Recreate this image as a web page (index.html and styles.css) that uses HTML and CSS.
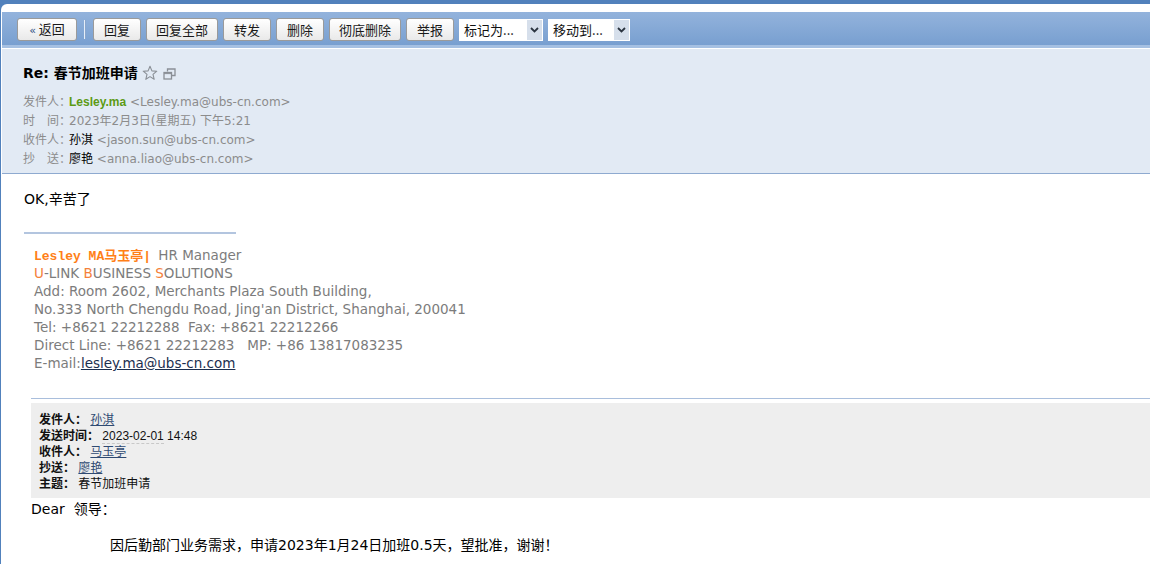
FILE: index.html
```html
<!DOCTYPE html>
<html lang="zh-CN">
<head>
<meta charset="utf-8">
<title>Re: 春节加班申请</title>
<link rel="stylesheet" href="styles.css">
</head>
<body>
<div class="frame">
  <div class="win">
    <div class="toolbar">
      <button class="btn btn-back"><span class="laquo">«</span> 返回</button>
      <span class="sep"></span>
      <button class="btn">回复</button>
      <button class="btn">回复全部</button>
      <button class="btn">转发</button>
      <button class="btn">删除</button>
      <button class="btn">彻底删除</button>
      <button class="btn">举报</button>
      <div class="select sel-mark"><span class="sel-text">标记为...</span><span class="sel-arrow"><svg width="9" height="6" viewBox="0 0 9 6"><path d="M1 1 L4.5 4.5 L8 1" fill="none" stroke="#2b3440" stroke-width="1.8"/></svg></span></div>
      <div class="select sel-move"><span class="sel-text">移动到...</span><span class="sel-arrow"><svg width="9" height="6" viewBox="0 0 9 6"><path d="M1 1 L4.5 4.5 L8 1" fill="none" stroke="#2b3440" stroke-width="1.8"/></svg></span></div>
    </div>
    <div class="toolbar-strip"></div>
    <div class="head">
      <div class="subject">
        <span class="subject-text">Re: 春节加班申请</span>
        <svg class="ico-star" width="16" height="16" viewBox="0 0 16 16"><path d="M8 1.2 L9.9 5.9 L14.8 6.2 L11 9.4 L12.2 14.3 L8 11.6 L3.8 14.3 L5 9.4 L1.2 6.2 L6.1 5.9 Z" fill="none" stroke="#8a8f96" stroke-width="1.1" stroke-linejoin="round"/></svg>
        <svg class="ico-win" width="13" height="12" viewBox="0 0 13 12"><path d="M4.5 3.5 V1 H12 V7.5 H9" fill="none" stroke="#8a8f96" stroke-width="1.3"/><rect x="1" y="4.5" width="7.5" height="6.5" fill="none" stroke="#8a8f96" stroke-width="1.3"/><line x1="1" y1="5.6" x2="8.5" y2="5.6" stroke="#8a8f96" stroke-width="1"/></svg>
      </div>
      <div class="meta">
        <div class="meta-row"><span class="label">发件人：</span><span class="sender">Lesley.ma</span> <span class="addr">&lt;Lesley.ma@ubs-cn.com&gt;</span></div>
        <div class="meta-row"><span class="label">时　间：</span><span class="addr">2023年2月3日(星期五) 下午5:21</span></div>
        <div class="meta-row"><span class="label">收件人：</span><span class="name">孙淇</span> <span class="addr">&lt;jason.sun@ubs-cn.com&gt;</span></div>
        <div class="meta-row"><span class="label">抄　送：</span><span class="name">廖艳</span> <span class="addr">&lt;anna.liao@ubs-cn.com&gt;</span></div>
      </div>
    </div>
    <div class="mail">
      <p class="reply">OK,辛苦了</p>
      <div class="sig-rule"></div>
      <div class="sig">
        <div class="sig-line"><span class="sig-name">Lesley MA马玉亭|</span> HR Manager</div>
        <div class="sig-line"><span class="o">U</span>-LINK <span class="o">B</span>USINESS <span class="o">S</span>OLUTIONS</div>
        <div class="sig-line">Add: Room 2602, Merchants Plaza South Building,</div>
        <div class="sig-line">No.333 North Chengdu Road, Jing'an District, Shanghai, 200041</div>
        <div class="sig-line">Tel: +8621 22212288&nbsp; Fax: +8621 22212266</div>
        <div class="sig-line">Direct Line: +8621 22212283&nbsp;&nbsp; MP: +86 13817083235</div>
        <div class="sig-line">E-mail:<a class="sig-mail" href="#">lesley.ma@ubs-cn.com</a></div>
      </div>
      <div class="quote-rule"></div>
      <div class="quote">
        <div class="q-line"><b>发件人：</b> <a href="#" class="qlink">孙淇</a></div>
        <div class="q-line"><b>发送时间：</b> <span class="qdate">2023-02-01</span> 14:48</div>
        <div class="q-line"><b>收件人：</b> <a href="#" class="qlink">马玉亭</a></div>
        <div class="q-line"><b>抄送：</b> <a href="#" class="qlink">廖艳</a></div>
        <div class="q-line"><b>主题：</b> 春节加班申请</div>
      </div>
      <div class="orig">
        <div class="o-line">Dear&nbsp; 领导：</div>
        <div class="o-line">&nbsp;</div>
        <div class="o-line orig-indent">因后勤部门业务需求，申请2023年1月24日加班0.5天，望批准，谢谢！</div>
      </div>
    </div>
  </div>
</div>
</body>
</html>
```
FILE: styles.css
```css
html, body {
  margin: 0;
  padding: 0;
  background: #ffffff;
}
body {
  font-family: "DejaVu Sans", "Noto Sans CJK SC", sans-serif;
  color: #000;
}
.frame {
  background: #5181bc;
  padding-top: 4px;
  padding-left: 1px;
  min-height: 560px;
}
.win {
  background: #ffffff;
  border-top-left-radius: 6px;
  padding-top: 8px;
  padding-left: 1px;
  min-height: 552px;
}
.toolbar {
  height: 33px;
  box-sizing: border-box;
  padding: 6px 0 0 15px;
  background: linear-gradient(#93b3dc, #789fd0);
  display: flex;
  align-items: flex-start;
  gap: 5px;
}
.btn {
  height: 23px;
  box-sizing: border-box;
  padding: 0 9px;
  min-width: 48px;
  border: 1px solid #9a9a9a;
  border-radius: 3px;
  background: linear-gradient(#ffffff, #e9e9e9);
  font-family: "Noto Sans CJK SC", sans-serif;
  font-size: 13px;
  line-height: 20px;
  color: #1a1a1a;
  margin: 0;
}
.btn-back {
  width: 60px;
}
.laquo {
  color: #2d4d80;
  font-family: "DejaVu Sans", sans-serif;
  font-size: 11px;
}
.sep {
  width: 1px;
  height: 19px;
  margin: 2px 3px 0 2px;
  background: #e6eef8;
  box-shadow: 1px 0 0 #8aa6cc;
}
.select {
  margin-top: 1px;
  height: 22px;
  box-sizing: border-box;
  background: #ffffff;
  display: flex;
  align-items: stretch;
  font-family: "Noto Sans CJK SC", sans-serif;
  font-size: 13px;
  color: #111;
}
.sel-mark { width: 84px; }
.sel-move { width: 82px; }
.sel-text {
  flex: 1;
  padding-left: 5px;
  line-height: 22px;
  white-space: nowrap;
  overflow: hidden;
}
.sel-arrow {
  width: 15px;
  margin: 1px 1px 1px 0;
  background: #d6dfeb;
  display: flex;
  align-items: center;
  justify-content: center;
}
.toolbar-strip {
  height: 3px;
  background: #a5c0e2;
  border-bottom: 1px solid #ffffff;
}
.head {
  background: #e2eaf4;
  border-bottom: 1px solid #8eaad0;
  padding: 15px 20px 5px 21px;
  height: 104px;
}
.subject {
  display: flex;
  align-items: center;
  height: 18px;
}
.subject-text {
  font-family: "DejaVu Sans", "Noto Sans CJK SC", sans-serif;
  font-weight: bold;
  font-size: 14px;
  line-height: 18px;
  color: #000;
}
.ico-star {
  margin-left: 4px;
}
.ico-win {
  margin-left: 5px;
  margin-top: 2px;
}
.meta {
  margin-top: 9px;
  font-size: 12px;
}
.meta-row {
  line-height: 19px;
  height: 19px;
  white-space: nowrap;
}
.label {
  display: inline-block;
  width: 46px;
  color: #8c8c8c;
  font-family: "Noto Sans CJK SC", sans-serif;
}
.sender {
  color: #5c9a14;
  font-family: "Liberation Sans", sans-serif;
  font-weight: bold;
}
.addr {
  color: #8c8c8c;
}
.name {
  color: #000;
  font-family: "Noto Sans CJK SC", sans-serif;
}
.mail {
  padding: 15px 0 0 22px;
}
.reply {
  margin: 0;
  font-size: 14px;
  line-height: 20px;
}
.sig-rule {
  width: 212px;
  height: 2px;
  background: #b3c5df;
  margin: 23px 0 12px 0;
}
.sig {
  padding-left: 10px;
  font-size: 13.5px;
  color: #7c7c7c;
  white-space: nowrap;
}
.sig-line {
  height: 18px;
  line-height: 18px;
}
.sig-name {
  font-family: "Liberation Mono", "Noto Sans CJK SC", monospace;
  font-weight: bold;
  color: #ff7f17;
  font-size: 13px;
  margin-right: 3px;
}
.o {
  color: #f4803a;
}
.sig-mail {
  color: #1c2f4f;
  text-decoration: underline;
}
.quote-rule {
  margin: 26px 0 4px 7px;
  height: 1px;
  background: #a9bedc;
}
.quote {
  margin-left: 7px;
  background: #eeeeee;
  padding: 8px 8px 7px 8px;
  font-family: "Liberation Sans", "Noto Sans CJK SC", sans-serif;
  font-size: 12px;
  color: #111;
}
.q-line {
  height: 16px;
  line-height: 16px;
}
.quote b {
  font-family: "Noto Sans CJK SC", sans-serif;
  font-weight: bold;
}
.qlink {
  color: #2e4a72;
  text-decoration: underline;
}
.qdate {
  border-bottom: 1px dashed #c8c8c8;
}
.orig {
  margin-left: 7px;
  font-size: 14px;
  padding-top: 2px;
}
.o-line {
  height: 18px;
  line-height: 18px;
}
.orig-indent {
  padding-left: 79px;
}
```
